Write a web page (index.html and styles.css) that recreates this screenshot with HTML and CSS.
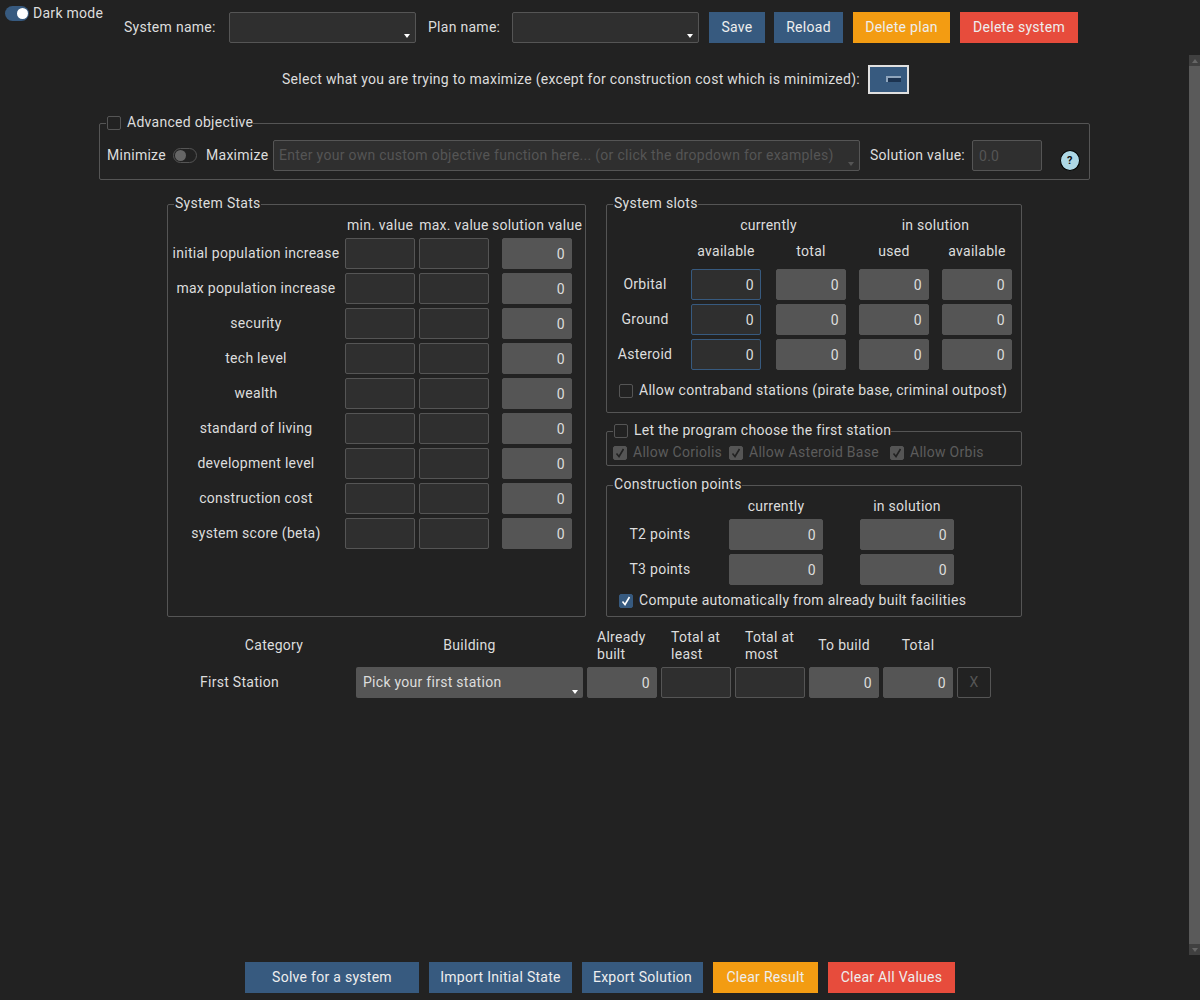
FILE: index.html
```html
<!DOCTYPE html>
<html lang="en">
<head>
    <meta charset="UTF-8">
    <meta name="viewport" content="width=device-width, initial-scale=1.0">
    <title>System planner</title>
    <link rel="stylesheet" href="styles.css">
</head>
<body>
<div class="page">

    <div class="top-bar">
        <label class="dark-toggle"><span class="switch switch-on"></span>Dark mode</label>
        <div class="top-controls">
            <label class="name-label">System name:</label>
            <div class="select-box"></div>
            <label class="plan-label">Plan name:</label>
            <div class="select-box"></div>
            <button class="btn btn-blue btn-save">Save</button>
            <button class="btn btn-blue btn-reload">Reload</button>
            <button class="btn btn-orange btn-plan">Delete plan</button>
            <button class="btn btn-red btn-system">Delete system</button>
        </div>
    </div>

    <div class="objective-row">
        <span class="objective-text">Select what you are trying to maximize (except for construction cost which is minimized):</span>
        <button class="objective-btn"><span class="objective-arrow"></span></button>
    </div>

    <fieldset class="panel advanced">
        <legend><input type="checkbox"><span>Advanced objective</span></legend>
        <div class="advanced-row">
            <span class="min-label">Minimize</span>
            <span class="switch switch-off"></span>
            <span class="max-label">Maximize</span>
            <div class="select-box objective-input">
                <span class="placeholder">Enter your own custom objective function here... (or click the dropdown for examples)</span>
            </div>
            <span class="solution-label">Solution value:</span>
            <input class="field solution-input" type="text" placeholder="0.0" disabled>
            <span class="help-icon">?</span>
        </div>
    </fieldset>

    <div class="panels">
        <fieldset class="panel stats">
            <legend>System Stats</legend>
            <div class="stats-grid">
                <span></span><span class="center">min. value</span><span class="center">max. value</span><span class="center">solution value</span>

                <span class="center">initial population increase</span><input class="field"><input class="field"><input class="field readonly" value="0">
                <span class="center">max population increase</span><input class="field"><input class="field"><input class="field readonly" value="0">
                <span class="center">security</span><input class="field"><input class="field"><input class="field readonly" value="0">
                <span class="center">tech level</span><input class="field"><input class="field"><input class="field readonly" value="0">
                <span class="center">wealth</span><input class="field"><input class="field"><input class="field readonly" value="0">
                <span class="center">standard of living</span><input class="field"><input class="field"><input class="field readonly" value="0">
                <span class="center">development level</span><input class="field"><input class="field"><input class="field readonly" value="0">
                <span class="center">construction cost</span><input class="field"><input class="field"><input class="field readonly" value="0">
                <span class="center">system score (beta)</span><input class="field"><input class="field"><input class="field readonly" value="0">
            </div>
        </fieldset>

        <div class="right-col">
            <fieldset class="panel slots">
                <legend>System slots</legend>
                <div class="slots-grid">
                    <span></span><span class="center head span-2">currently</span><span class="center head span-2">in solution</span>
                    <span></span><span class="center head first-col">available</span><span class="center head">total</span><span class="center head">used</span><span class="center head">available</span>

                    <span class="center">Orbital</span><input class="field focused" value="0"><input class="field readonly" value="0"><input class="field readonly" value="0"><input class="field readonly" value="0">
                    <span class="center">Ground</span><input class="field focused" value="0"><input class="field readonly" value="0"><input class="field readonly" value="0"><input class="field readonly" value="0">
                    <span class="center">Asteroid</span><input class="field focused" value="0"><input class="field readonly" value="0"><input class="field readonly" value="0"><input class="field readonly" value="0">
                </div>
                <label class="check-row"><input type="checkbox">Allow contraband stations (pirate base, criminal outpost)</label>
            </fieldset>

            <fieldset class="panel first-station">
                <legend><input type="checkbox"><span>Let the program choose the first station</span></legend>
                <div class="allow-row">
                    <label><input type="checkbox" checked disabled>Allow Coriolis</label>
                    <label><input type="checkbox" checked disabled>Allow Asteroid Base</label>
                    <label><input type="checkbox" checked disabled>Allow Orbis</label>
                </div>
            </fieldset>

            <fieldset class="panel points">
                <legend>Construction points</legend>
                <div class="points-grid">
                    <span></span><span class="center">currently</span><span class="center">in solution</span>
                    <span class="center">T2 points</span><input class="field readonly" value="0"><input class="field readonly" value="0">
                    <span class="center">T3 points</span><input class="field readonly" value="0"><input class="field readonly" value="0">
                </div>
                <label class="check-row"><input type="checkbox" checked>Compute automatically from already built facilities</label>
            </fieldset>
        </div>
    </div>

    <div class="build-grid">
        <span class="center">Category</span>
        <span class="center">Building</span>
        <span class="col-head">Already built</span>
        <span class="col-head">Total at least</span>
        <span class="col-head">Total at most</span>
        <span class="center">To build</span>
        <span class="center">Total</span>
        <span></span>

        <span class="row-name">First Station</span>
        <div class="select-box building-select">Pick your first station</div>
        <input class="field readonly" value="0">
        <input class="field">
        <input class="field">
        <input class="field readonly" value="0">
        <input class="field readonly" value="0">
        <button class="remove-btn">X</button>
    </div>

    <div class="bottom-bar">
        <button class="btn btn-blue btn-solve">Solve for a system</button>
        <button class="btn btn-blue btn-import">Import Initial State</button>
        <button class="btn btn-blue btn-export">Export Solution</button>
        <button class="btn btn-orange btn-clear">Clear Result</button>
        <button class="btn btn-red btn-clear-all">Clear All Values</button>
    </div>

    <div class="scrollbar">
        <span class="scroll-arrow"></span>
        <span class="scroll-arrow scroll-arrow-down"></span>
    </div>
</div>
</body>
</html>
```

FILE: styles.css
```css
* {
    box-sizing: border-box;
}
body {
    margin: 0;
    background-color: #222;
    color: #ddd;
    font-family: Roboto, "Noto Sans", sans-serif;
    font-size: 14px;
    line-height: 17px;
    letter-spacing: 0.28px;
}
.page {
    position: relative;
    display: flex;
    flex-direction: column;
    height: 1000px;
    overflow: hidden;
}

/* top bar */
.top-bar {
    display: flex;
    align-items: flex-start;
    padding: 6px 0 0 5px;
}
.dark-toggle {
    display: flex;
    align-items: center;
    gap: 4px;
    width: 100px;
    height: 15px;
    white-space: nowrap;
}
.top-controls {
    display: flex;
    align-items: center;
    margin: 6px 0 0 19px;
}
.name-label {
    width: 105px;
}
.plan-label {
    width: 84px;
    margin-left: 12px;
}
.top-controls .select-box {
    width: 187px;
}
.top-controls .btn-save {
    margin: 0 9px 0 10px;
}
.top-controls .btn-reload,
.top-controls .btn-plan {
    margin-right: 10px;
}
.btn {
    height: 31px;
    padding: 0;
    border: none;
    color: #eee;
    font: inherit;
    letter-spacing: inherit;
}
.btn-blue {
    background-color: #375a7f;
}
.btn-orange {
    background-color: #f39c12;
}
.btn-red {
    background-color: #e74c3c;
}
.btn-save { width: 56px; }
.btn-reload { width: 69px; }
.btn-plan { width: 97px; }
.btn-system { width: 118px; }

.switch {
    position: relative;
    display: inline-block;
    flex: none;
    width: 24px;
    height: 15px;
    border-radius: 8px;
}
.switch::after {
    content: "";
    position: absolute;
    top: 2px;
    width: 11px;
    height: 11px;
    border-radius: 50%;
}
.switch-on {
    background-color: #375a7f;
}
.switch-on::after {
    right: 1px;
    background-color: #fff;
}
.switch-off {
    border: 1px solid #555;
}
.switch-off::after {
    top: 1px;
    left: 1px;
    background-color: #666;
}

.select-box {
    position: relative;
    height: 31px;
    background-color: #2f2f2f;
    border: 1px solid #555;
    border-radius: 2px;
}
.select-box::after {
    content: "";
    position: absolute;
    right: 5px;
    bottom: 4px;
    border-top: 4px solid #fff;
    border-left: 3.5px solid transparent;
    border-right: 3.5px solid transparent;
}

/* objective */
.objective-row {
    display: flex;
    align-items: center;
    margin: 22px 0 0 282px;
}
.objective-text {
    width: 586px;
    white-space: nowrap;
}
.objective-btn {
    position: relative;
    width: 41px;
    height: 29px;
    padding: 0;
    background-color: #375a7f;
    border: 2px solid #e0e0e0;
}
.objective-arrow {
    position: absolute;
    top: 9px;
    left: 16px;
    width: 15px;
    height: 6px;
    background-color: #1c3350;
    border-top: 2px solid #8fa5bc;
    border-left: 2px solid #8fa5bc;
}

/* fieldsets */
.panel {
    min-width: 0;
    margin: 0;
    padding: 0;
    border: 1px solid #555;
    border-radius: 2px;
}
.panel legend {
    display: flex;
    align-items: center;
    gap: 6px;
    height: 17px;
    margin-left: 6px;
    padding: 0 0 2px 1px;
}
input[type="checkbox"] {
    flex: none;
    width: 14px;
    height: 14px;
    margin: 0;
    appearance: none;
    background-color: transparent;
    background-position: center;
    background-repeat: no-repeat;
    border: 1px solid #555;
    border-radius: 2px;
}
input[type="checkbox"]:checked {
    background-color: #375a7f;
    border-color: #375a7f;
    background-image: url("data:image/svg+xml,%3Csvg xmlns='http://www.w3.org/2000/svg' width='12' height='12'%3E%3Cpath d='M2.5 6.5 5 9.5 9.5 2' fill='none' stroke='%23fff' stroke-width='1.6'/%3E%3C/svg%3E");
}
input[type="checkbox"]:disabled {
    background-color: #555;
    border-color: #555;
    background-image: url("data:image/svg+xml,%3Csvg xmlns='http://www.w3.org/2000/svg' width='12' height='12'%3E%3Cpath d='M2.5 6.5 5 9.5 9.5 2' fill='none' stroke='%23222' stroke-width='1.6'/%3E%3C/svg%3E");
}
.field {
    width: 70px;
    height: 31px;
    padding: 0 6px;
    background-color: #2f2f2f;
    border: 1px solid #555;
    border-radius: 2px;
    color: #ddd;
    font: inherit;
    letter-spacing: inherit;
    text-align: right;
}
.readonly {
    background-color: #555;
}
.focused {
    border-color: #375a7f;
}
.center {
    text-align: center;
}

/* advanced objective */
.advanced {
    width: 991px;
    margin: 21px 0 0 99px;
}
.advanced-row {
    display: flex;
    align-items: center;
    margin-top: 8px;
    padding: 0 0 8px 7px;
}
.min-label {
    width: 66px;
}
.advanced-row .switch {
    margin-right: 9px;
}
.max-label {
    width: 67px;
}
.objective-input {
    display: flex;
    align-items: center;
    width: 587px;
    padding-left: 5px;
}
.objective-input::after {
    border-top-color: #555;
}
.placeholder {
    color: #555;
    white-space: nowrap;
}
.solution-label {
    width: 102px;
    margin-left: 10px;
}
.solution-input {
    text-align: left;
}
.solution-input::placeholder {
    color: #555;
}
.help-icon {
    width: 20px;
    height: 21px;
    margin: 9px 0 0 18px;
    background-color: #add8e6;
    border: 1px solid #000;
    border-radius: 50%;
    color: #111;
    font-size: 11px;
    font-weight: 700;
    line-height: 19px;
    text-align: center;
}

/* stats + slots */
.panels {
    display: flex;
    gap: 20px;
    margin: 16px 0 0 167px;
}
.stats {
    width: 419px;
}
.stats-grid {
    display: grid;
    grid-template-columns: 170px 70px 70px 88px;
    grid-auto-rows: 31px;
    grid-template-rows: 17px;
    gap: 4px;
    justify-items: center;
    align-items: center;
    margin-top: 4px;
    padding-left: 3px;
    white-space: nowrap;
}
.right-col {
    display: flex;
    flex-direction: column;
    width: 416px;
}
.slots-grid {
    display: grid;
    grid-template-columns: 66px 72px 70px 70px 70px;
    grid-template-rows: 22px 22px 31px 31px 31px;
    gap: 4px 13px;
    align-items: center;
    margin-top: 4px;
    padding-left: 5px;
}
.head {
    align-self: start;
}
.span-2 {
    grid-column: span 2;
}
.first-col {
    width: 70px;
}
.check-row {
    display: flex;
    align-items: center;
    gap: 6px;
    margin: 12px 0 13px 12px;
}
.first-station {
    margin-top: 10px;
}
.allow-row {
    display: grid;
    grid-template-columns: 108px 153px auto;
    gap: 8px;
    padding: 4px 0 4px 6px;
    color: #5c5c5c;
}
.allow-row label {
    display: flex;
    align-items: center;
    gap: 6px;
    white-space: nowrap;
}
.points {
    margin-top: 11px;
}
.points-grid {
    display: grid;
    grid-template-columns: 64px 94px 94px;
    grid-template-rows: 17px 31px 31px;
    gap: 4px 37px;
    align-items: center;
    margin: 4px 0 0 21px;
    white-space: nowrap;
}
.points-grid .field {
    width: 94px;
}
.points .check-row {
    margin: 7px 0 7px 12px;
}

/* building table */
.build-grid {
    display: grid;
    grid-template-columns: 156px 227px repeat(5, 70px) 34px;
    grid-template-rows: 34px 31px;
    gap: 5px 4px;
    align-items: center;
    margin: 11px 0 0 196px;
}
.col-head {
    padding: 2px 0 0 10px;
}
.row-name {
    padding-left: 4px;
}
.building-select {
    display: flex;
    align-items: center;
    padding-left: 7px;
    background-color: #555;
    border: none;
}
.remove-btn {
    width: 34px;
    height: 31px;
    padding: 0;
    background: transparent;
    border: 1px solid #555;
    border-radius: 2px;
    color: #555;
    font: inherit;
}

/* bottom buttons */
.bottom-bar {
    display: flex;
    gap: 10px;
    margin: auto 0 7px 245px;
}
.btn-solve { width: 174px; }
.btn-import { width: 143px; }
.btn-export { width: 121px; }
.btn-clear { width: 105px; }
.btn-clear-all { width: 127px; }

/* scrollbar */
.scrollbar {
    position: absolute;
    top: 55px;
    right: 0;
    display: flex;
    flex-direction: column;
    justify-content: space-between;
    width: 11px;
    height: 900px;
    background-color: #5a5a5a;
}
.scroll-arrow {
    display: flex;
    align-items: center;
    justify-content: center;
    height: 11px;
    background-color: #404040;
}
.scroll-arrow::after {
    content: "";
    border-bottom: 4px solid #666;
    border-left: 3px solid transparent;
    border-right: 3px solid transparent;
}
.scroll-arrow-down::after {
    border-top: 4px solid #666;
    border-bottom: none;
}
```
